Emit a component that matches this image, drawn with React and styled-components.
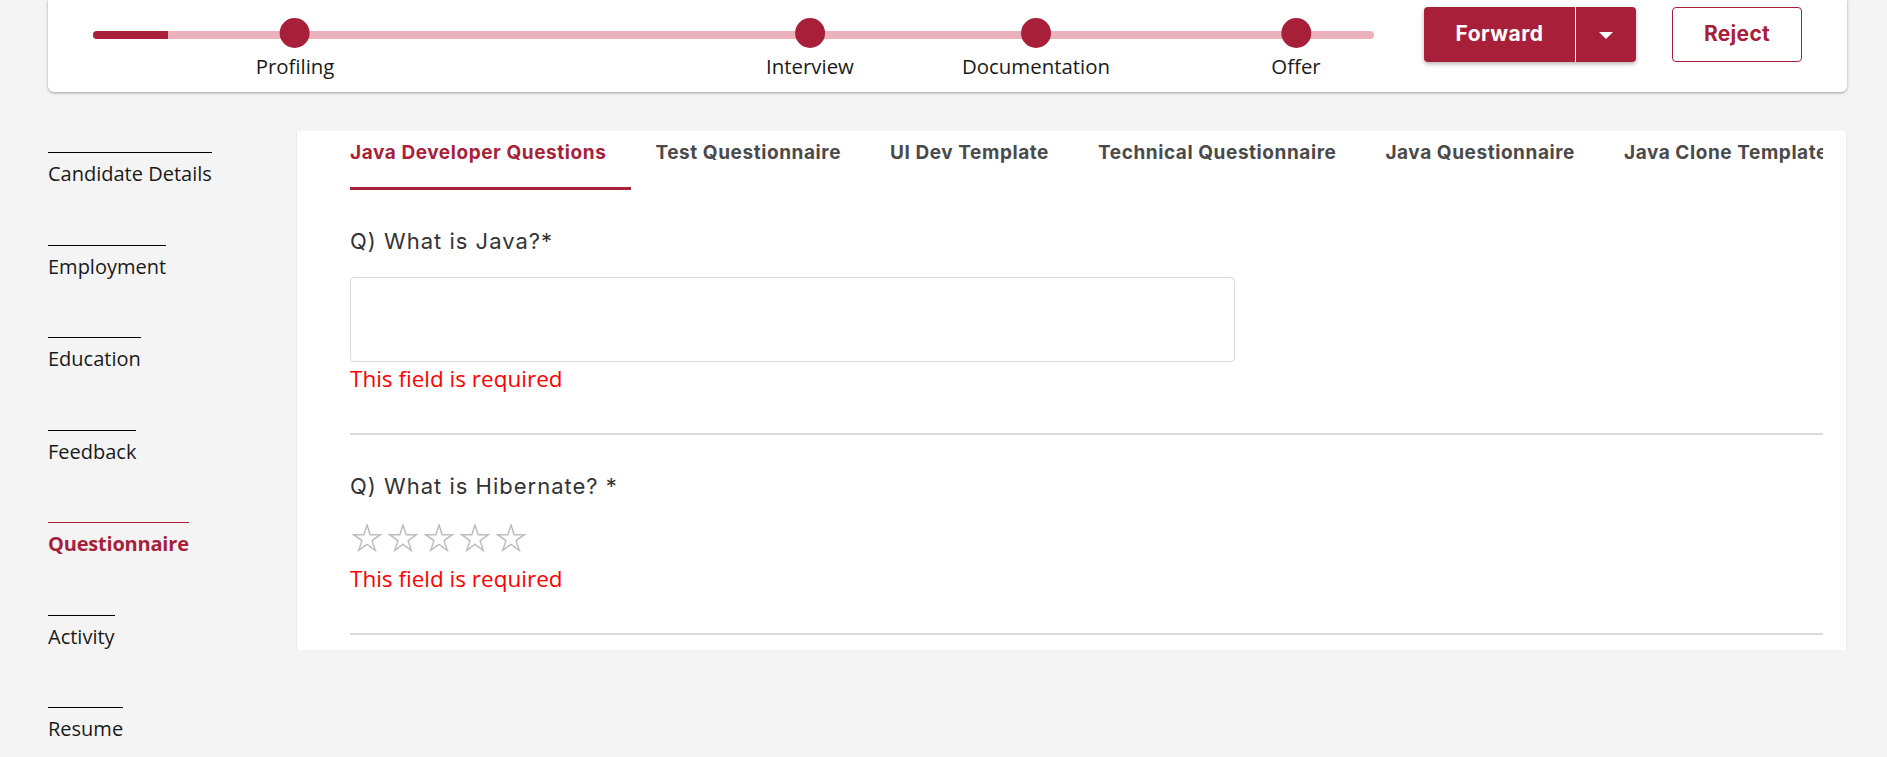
import React from "react";
import styled, { createGlobalStyle } from "styled-components";

const crimson = "#a81f3a";
const brandFont = `Inter, Roboto, "Liberation Sans", sans-serif`;
const uiFont = `"Open Sans", "Noto Sans", "Liberation Sans", sans-serif`;

const steps = [
  { label: "Profiling", at: 202 },
  { label: "Interview", at: 717 },
  { label: "Documentation", at: 943 },
  { label: "Offer", at: 1203 },
];

const sections = [
  "Candidate Details",
  "Employment",
  "Education",
  "Feedback",
  "Questionnaire",
  "Activity",
  "Resume",
];

const templates = [
  "Java Developer Questions",
  "Test Questionnaire",
  "UI Dev Template",
  "Technical Questionnaire",
  "Java Questionnaire",
  "Java Clone Template",
];

function Star() {
  return (
    <StarIcon viewBox="0 0 30 28" width="30" height="28">
      <path d="M15 1 L18.145 10.672 L28.315 10.674 L20.088 16.653 L23.229 26.326 L15 20.35 L6.771 26.326 L9.912 16.653 L1.685 10.674 L11.855 10.672 Z" />
    </StarIcon>
  );
}

export default function App() {
  return (
    <>
      <GlobalStyle />
      <Header>
        <Stepper>
          <Track>
            <TrackFill />
          </Track>
          {steps.map((s) => (
            <Step key={s.label} $at={s.at}>
              <Dot />
              <StepLabel>{s.label}</StepLabel>
            </Step>
          ))}
        </Stepper>
        <Actions>
          <ForwardGroup>
            <ForwardMain>Forward</ForwardMain>
            <ForwardMenu>
              <Caret />
            </ForwardMenu>
          </ForwardGroup>
          <RejectButton>Reject</RejectButton>
        </Actions>
      </Header>

      <Body>
        <SideNav>
          {sections.map((s) => (
            <NavItem key={s} $active={s === "Questionnaire"}>
              {s}
            </NavItem>
          ))}
        </SideNav>

        <Panel>
          <TabBar>
            {templates.map((t, i) => (
              <Tab key={t} $active={i === 0}>
                {t}
              </Tab>
            ))}
          </TabBar>

          <QuestionBlock>
            <Question>Q) What is Java?*</Question>
            <Answer />
            <ErrorText $gap={3}>This field is required</ErrorText>
          </QuestionBlock>

          <QuestionBlock>
            <Question>Q) What is Hibernate? *</Question>
            <StarRow>
              <Star />
              <Star />
              <Star />
              <Star />
              <Star />
            </StarRow>
            <ErrorText $gap={13}>This field is required</ErrorText>
          </QuestionBlock>
        </Panel>
      </Body>
    </>
  );
}

const GlobalStyle = createGlobalStyle`
  html, body {
    margin: 0;
    background: #f4f4f4;
    overflow: hidden;
  }
  body {
    font-family: ${uiFont};
    color: #1a1a1a;
  }
  * {
    box-sizing: border-box;
  }
`;

//===========================//
const Header = styled.header`
  display: flex;
  align-items: flex-start;
  height: 92px;
  margin: 0 40px 0 48px;
  padding: 0 45px;
  background: #fff;
  border-radius: 0 0 6px 6px;
  box-shadow: 0 1px 3px rgba(0, 0, 0, 0.35);
`;

const Stepper = styled.div`
  position: relative;
  flex-shrink: 0;
  width: 1281px;
  height: 100%;
`;

const Track = styled.div`
  margin-top: 31px;
  height: 8px;
  border-radius: 4px;
  background: #ebb2bc;
  overflow: hidden;
`;

const TrackFill = styled.div`
  width: 75px;
  height: 100%;
  background: ${crimson};
`;

const Step = styled.div`
  position: absolute;
  top: 18px;
  left: ${(p) => p.$at}px;
  transform: translateX(-50%);
  display: flex;
  flex-direction: column;
  align-items: center;
`;

const Dot = styled.span`
  width: 30px;
  height: 30px;
  border-radius: 50%;
  background: ${crimson};
`;

const StepLabel = styled.span`
  margin-top: 4px;
  font-size: 20.4px;
  line-height: 28px;
  white-space: nowrap;
  color: #1a1a1a;
`;

const Actions = styled.div`
  display: flex;
  gap: 36px;
  margin-left: auto;
  padding-top: 7px;
`;

const ForwardGroup = styled.div`
  display: flex;
  height: 55px;
  border-radius: 4px;
  background: ${crimson};
  box-shadow: 0 2px 4px rgba(0, 0, 0, 0.3);
  overflow: hidden;
`;

const ForwardMain = styled.button`
  width: 152px;
  border: 0;
  border-right: 1px solid #fff;
  background: transparent;
  color: #fff;
  font-family: ${brandFont};
  font-weight: 700;
  font-size: 21px;
  letter-spacing: 0.5px;
  padding: 0 0 3px;
`;

const ForwardMenu = styled.button`
  display: flex;
  align-items: center;
  justify-content: center;
  width: 60px;
  border: 0;
  background: transparent;
  padding: 2px 0 0;
`;

const Caret = styled.span`
  width: 0;
  height: 0;
  border-left: 7px solid transparent;
  border-right: 7px solid transparent;
  border-top: 7px solid #fff;
`;

const RejectButton = styled.button`
  width: 130px;
  height: 55px;
  border: 1px solid ${crimson};
  border-radius: 4px;
  background: #fff;
  color: ${crimson};
  font-family: ${brandFont};
  font-weight: 700;
  font-size: 21px;
  letter-spacing: 0.3px;
  padding: 0 0 3px;
`;

//===========================//
const Body = styled.div`
  display: flex;
  align-items: flex-start;
  margin: 39px 40px 0 48px;
`;

const SideNav = styled.nav`
  display: flex;
  flex-direction: column;
  align-items: flex-start;
  flex-shrink: 0;
  width: 248px;
  padding-top: 21px;
`;

const NavItem = styled.a`
  display: inline-block;
  padding-top: 7px;
  margin-bottom: 56.5px;
  border-top: 1px solid ${(p) => (p.$active ? crimson : "#000")};
  font-size: 20px;
  line-height: 28px;
  font-weight: ${(p) => (p.$active ? 700 : 400)};
  letter-spacing: ${(p) => (p.$active ? "-0.2px" : "0")};
  color: ${(p) => (p.$active ? crimson : "#1a1a1a")};
  cursor: pointer;
  &:last-child {
    margin-bottom: 0;
  }
`;

const Panel = styled.main`
  flex: 1;
  min-width: 0;
  padding: 0 23px 15px 53px;
  background: #fff;
  border-left: 1px solid #ebebeb;
  border-right: 1px solid #ebebeb;
`;

const TabBar = styled.div`
  display: flex;
  overflow: hidden;
  white-space: nowrap;
`;

const Tab = styled.div`
  flex-shrink: 0;
  margin-right: 24px;
  padding: 11px 25px 23px 0;
  border-bottom: 3px solid ${(p) => (p.$active ? crimson : "transparent")};
  font-family: ${brandFont};
  font-weight: 700;
  font-size: 19px;
  letter-spacing: 0.57px;
  line-height: 22px;
  color: ${(p) => (p.$active ? crimson : "#4a4a4a")};
  cursor: pointer;
`;

const QuestionBlock = styled.section`
  padding: 37px 0 40px;
  border-bottom: 2px solid #d9d9d9;
`;

const Question = styled.div`
  font-family: ${brandFont};
  font-size: 22px;
  letter-spacing: 1px;
  line-height: 28px;
  color: #333;
`;

const Answer = styled.textarea`
  display: block;
  width: 885px;
  height: 85px;
  margin-top: 22px;
  border: 1px solid #d9d9d9;
  border-radius: 4px;
  resize: none;
  outline: none;
`;

const ErrorText = styled.div`
  margin-top: ${(p) => p.$gap}px;
  font-size: 22.5px;
  line-height: 28px;
  color: #ff0000;
`;

const StarRow = styled.div`
  display: flex;
  gap: 6px;
  margin-top: 24px;
  padding-left: 2px;
`;

const StarIcon = styled.svg`
  display: block;
  fill: none;
  stroke: #bdbdbd;
  stroke-width: 1.5;
  stroke-linejoin: miter;
`;
